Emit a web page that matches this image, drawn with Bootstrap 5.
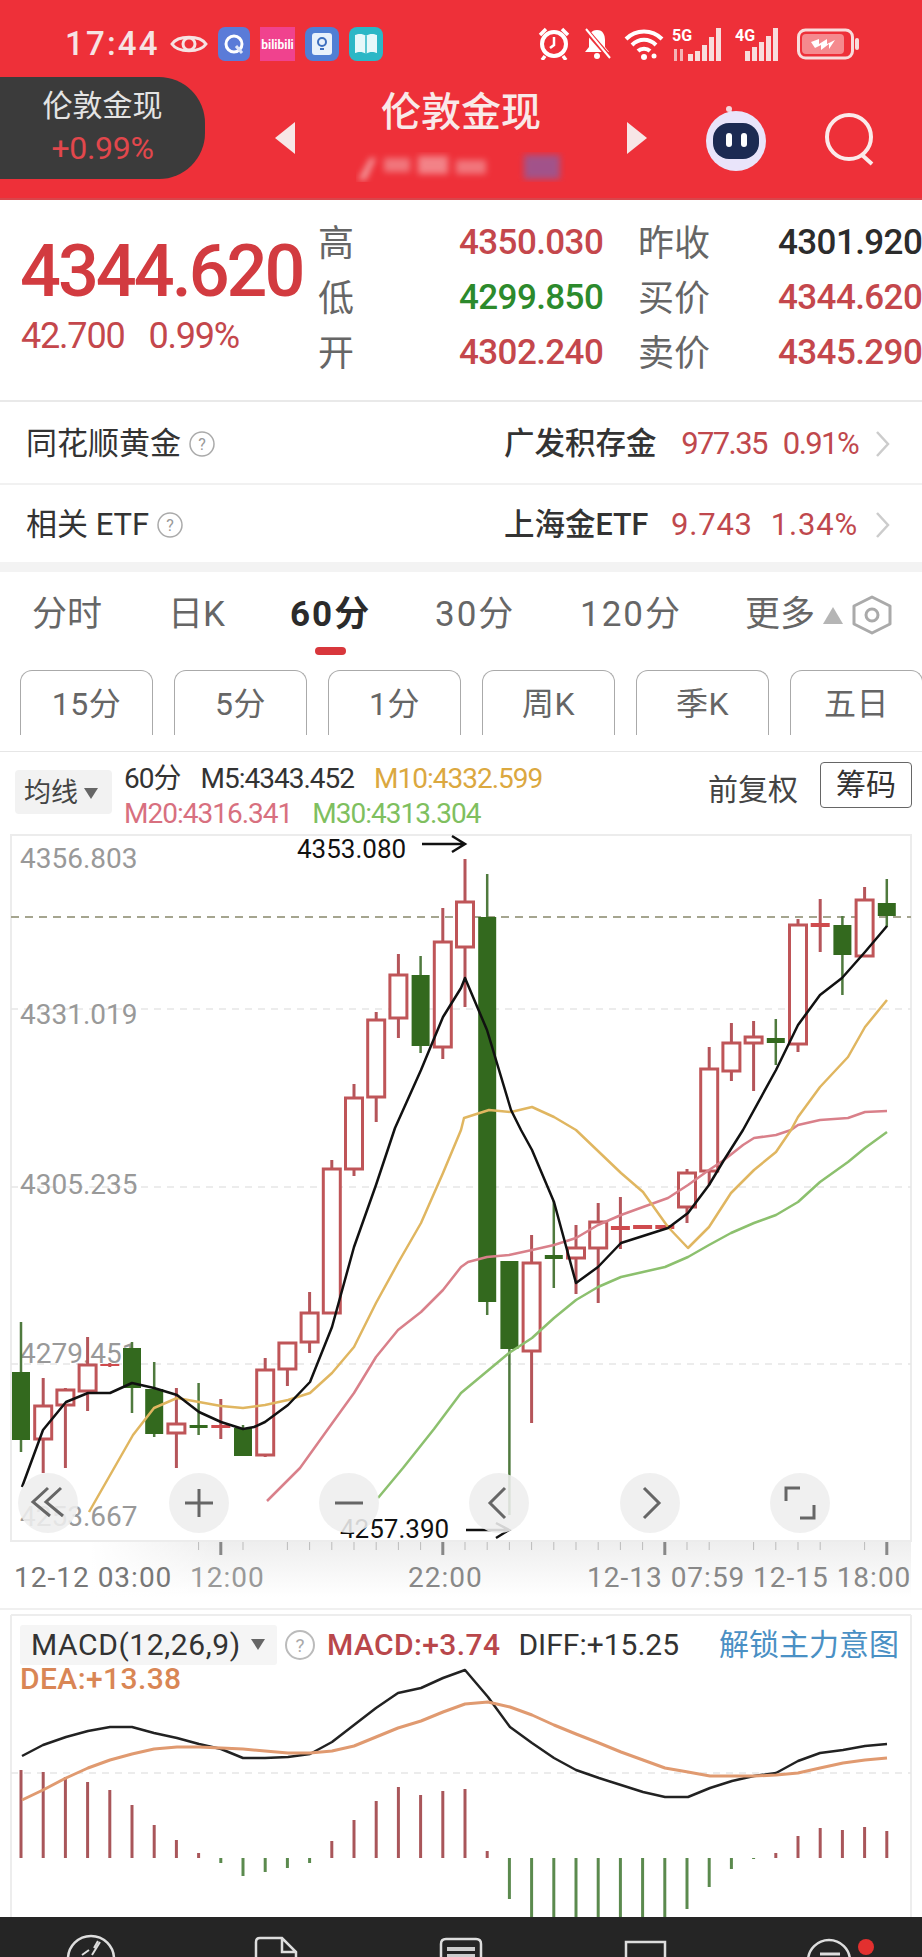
<!DOCTYPE html>
<html lang="zh-CN">
<head>
  <meta charset="UTF-8">
  <meta name="viewport" content="width=device-width, initial-scale=1.0">
  <title>伦敦金现</title>
  <link href="https://cdn.jsdelivr.net/npm/bootstrap@5.3.0/dist/css/bootstrap.min.css" rel="stylesheet">
  <style>
    body { width: 922px; height: 1957px; overflow: hidden; background: #fff; font-family: Roboto, "Noto Sans CJK SC", sans-serif; color: #333; }
    svg { display: block; flex: none; }
    .hq-red { color: #c4474c; }
    .hq-green { color: #2c8a2c; }

    .hq-head { height: 200px; background: #ee3039; border-bottom: 2px solid #d9454b; color: #fff; }
    .hq-status { height: 77px; padding: 10px 62px 0 65px; }
    .hq-time { font-size: 33px; font-weight: 500; letter-spacing: 2.2px; width: 105px; color: #f6e3e3; }
    .hq-app { margin-left: 10px; }
    .hq-pill { width: 205px; height: 102px; background: #3b3b3b; border-radius: 0 46px 46px 0; line-height: 1.36; }
    .hq-pill-name { font-size: 30px; color: #e4e4e4; }
    .hq-pill-pct { font-size: 32px; color: #e2474c; letter-spacing: -.3px; }
    .hq-title { font-size: 40px; line-height: 56px; margin-top: 8px; font-weight: 500; color: #f9e9e9; }
    .hq-titlebox { width: 332px; }
    .hq-smudge { margin-top: 11px; opacity: .6; }

    .hq-quote { height: 202px; border-bottom: 2px solid #e9e9e9; }
    .hq-left { width: 318px; padding: 38px 0 0 20px; }
    .hq-price { font-size: 72px; line-height: 68px; font-weight: 500; letter-spacing: -3px; color: #d23b40; }
    .hq-sub { font-size: 36px; line-height: 44px; letter-spacing: -1.2px; margin-top: 8px; margin-left: 1px; color: #c4474c; }
    .hq-grid { display: grid; grid-template-columns: 141px 179px 140px 144px; grid-auto-rows: 55px; padding-top: 16px; white-space: nowrap; align-items: center; }
    .hq-lab { font-size: 36px; color: #666; }
    .hq-val { font-size: 35px; font-weight: 500; letter-spacing: -.6px; }
    .hq-black { color: #2c2c2c; }

    .hq-row { height: 83px; padding: 3px 32px 0 0; border-bottom: 2px solid #f1f1f1; font-size: 31px; }
    .hq-row-b { height: 77px; border-bottom: 0; }
    .hq-row-left { width: 504px; padding-left: 26px; color: #333; }
    .hq-row-name { color: #333; font-weight: 500; font-size: 30.5px; }
    .hq-num { font-size: 31px; color: #c0484d; letter-spacing: -1.6px; margin-left: 16px; }
    .hq-row-b .hq-num { letter-spacing: .8px; margin-left: 18px; }
    .hq-chev { margin-left: 17px; }
    .hq-band { height: 10px; background: #f3f3f3; }

    .hq-tabs { height: 98px; padding: 16px 0 0 32px; font-size: 35px; color: #666; }
    .hq-tab { position: relative; height: 54px; line-height: 54px; white-space: nowrap; flex: none; }
    .hq-tab:nth-child(1) { width: 136px; }
    .hq-tab:nth-child(2) { width: 122px; }
    .hq-tab:nth-child(3) { width: 145px; letter-spacing: 2px; }
    .hq-tab:nth-child(4) { width: 145px; letter-spacing: 2px; }
    .hq-tab:nth-child(5) { width: 165px; letter-spacing: 2px; }
    .hq-tab-on { font-weight: 700; color: #2b2b2b; }
    .hq-tab-on::after { content: ""; position: absolute; left: 25px; top: 59px; width: 31px; height: 8px; border-radius: 4px; background: #d8373c; }

    .hq-periods { height: 82px; padding-left: 20px; gap: 21px; border-bottom: 1px solid #e6e6e6; }
    .hq-period { width: 133px; height: 65px; border: 1px solid #aaa; border-bottom: 0; border-radius: 12px 12px 0 0; font-size: 32px; letter-spacing: .5px; color: #666; line-height: 66px; text-align: center; flex: none; }

    .hq-legend { height: 82px; position: relative; padding: 0 10px 0 15px; }
    .hq-malabel { width: 97px; height: 44px; margin-top: 18px; background: #f2f2f2; border-radius: 4px; font-size: 27px; padding: 3px 0 0 9px; gap: 6px; color: #444; }
    .hq-tri { width: 0; height: 0; border-left: 7px solid transparent; border-right: 7px solid transparent; border-top: 11px solid #666; }
    .hq-ma { margin-left: 12px; padding-top: 9px; font-size: 28px; line-height: 35px; letter-spacing: -1px; white-space: nowrap; }
    .hq-ma span { margin-right: 20px; }
    .hq-m10 { color: #dba83f; }
    .hq-m20 { color: #d8707f; }
    .hq-m30 { color: #7fbf5f; }
    .hq-fq { font-size: 30px; color: #444; margin-top: 15px; }
    .hq-chips { width: 92px; height: 46px; margin: 10px 0 0 22px; border: 1px solid #666; border-radius: 4px; font-size: 30px; line-height: 43px; text-align: center; color: #333; }

    .hq-chart { position: relative; height: 780px; }
    .hq-ctl { position: absolute; top: 639px; width: 60px; height: 60px; border-radius: 50%; background: rgba(238,238,238,.88); }
    .hq-ctl svg { margin: 10px; }
    .hq-ctl-a { left: 18px; }
    .hq-ctl-b { left: 169px; }
    .hq-ctl-c { left: 319px; }
    .hq-ctl-d { left: 469px; }
    .hq-ctl-e { left: 620px; }
    .hq-ctl-f { left: 770px; }

    .hq-macd { position: relative; height: 303px; overflow: hidden; }
    .hq-macd-head { position: absolute; left: 20px; right: 23px; top: 8px; font-size: 30px; white-space: nowrap; }
    .hq-macd-box { width: 257px; height: 40px; background: #f5f5f5; border-radius: 3px; padding-left: 11px; font-size: 30px; letter-spacing: .6px; color: #333; gap: 10px; }
    .hq-macd-val { font-weight: 500; color: #b9474b; margin-left: 12px; letter-spacing: .4px; }
    .hq-macd-diff { color: #333; margin-left: 18px; }
    .hq-macd-lock { color: #4a90c4; margin-left: auto; }
    .hq-macd-dea { color: #d98655; font-weight: 500; line-height: 30px; margin-top: -3px; letter-spacing: .4px; }

    .hq-foot { height: 40px; background: #252525; overflow: hidden; padding-left: 61px; gap: 125px; }
    .hq-dot { position: absolute; left: 857px; top: 1938px; }
  </style>
</head>
<body>
  <div class="hq-head">
    <div class="hq-status d-flex align-items-center">
      <div class="hq-time">17:44</div>
      <svg width="38" height="24" viewBox="0 0 38 24"><path d="M2 12C8 3 30 3 36 12C30 21 8 21 2 12Z" fill="none" stroke="#f6e3e3" stroke-width="3"/><circle cx="19" cy="12" r="6" fill="none" stroke="#f6e3e3" stroke-width="3"/></svg>
      <svg width="32" height="34" class="hq-app" viewBox="0 0 32 34"><rect width="32" height="34" rx="7" fill="#5a7bd8"/><circle cx="16" cy="17" r="8" fill="none" stroke="#fff" stroke-width="3"/><path d="M18 19l6 7" stroke="#dfe6f8" stroke-width="3"/></svg>
      <svg width="35" height="34" class="hq-app" viewBox="0 0 35 34"><rect width="35" height="34" fill="#f0428e"/><text x="17.5" y="22" text-anchor="middle" font-size="12" font-weight="700" fill="#fff" font-family="Roboto">bilibili</text></svg>
      <svg width="34" height="34" class="hq-app" viewBox="0 0 34 34"><rect width="34" height="34" rx="8" fill="#4f7fd4"/><rect x="7" y="6" width="20" height="22" rx="3" fill="#e8f1fb"/><circle cx="17" cy="15" r="4" fill="none" stroke="#3d6fbf" stroke-width="2"/><path d="M15 22h4" stroke="#3d6fbf" stroke-width="2"/></svg>
      <svg width="34" height="34" class="hq-app" viewBox="0 0 34 34"><rect width="34" height="34" rx="8" fill="#2bb7c6"/><path d="M17 9C13 6 9 7 6 8V26C9 25 13 24 17 27C21 24 25 25 28 26V8C25 7 21 6 17 9Z" fill="#e6f8fa"/><path d="M17 9V27" stroke="#2bb7c6" stroke-width="1.5"/></svg>

      <div class="ms-auto d-flex align-items-center gap-2">
        <svg width="32" height="33" viewBox="0 0 32 33"><circle cx="16" cy="17" r="12" fill="none" stroke="#fff" stroke-width="4"/><path d="M16 10v8l-4 3" stroke="#fff" stroke-width="2.5" fill="none"/><path d="M2 8L8 2M30 8L24 2M7 29l-3 4M25 29l3 4" stroke="#fff" stroke-width="3.5"/></svg>
        <svg width="30" height="33" class="ms-1" viewBox="0 0 30 33"><path d="M15 3C9 3 7 8 7 13V20L3 25H27L23 20V13C23 8 21 3 15 3Z" fill="#fff"/><circle cx="15" cy="29" r="3" fill="#fff"/><path d="M3 2L29 32" stroke="#ee3039" stroke-width="5"/><path d="M4 2L28 31" stroke="#fff" stroke-width="2"/></svg>
        <svg width="40" height="32" class="ms-1" viewBox="0 0 40 32"><path d="M2 11C12 1 28 1 38 11M8 17C15 10 25 10 32 17M14 23C17 20 23 20 26 23" fill="none" stroke="#fff" stroke-width="4"/><circle cx="20" cy="29" r="3" fill="#fff"/><circle cx="30" cy="28" r="2.5" fill="#fff"/></svg>
        <svg width="55" height="34" viewBox="0 0 55 34"><text x="0" y="14" font-size="16" font-weight="700" fill="#fff" font-family="Roboto">5G</text><path d="M16 34V27h5v7zM23 34V24h5v10zM30 34V18h5v16zM37 34V10h5v24zM44 34V1h5v33z" fill="#f8dcdc"/><path d="M2 34V22h3v12zM8 34V22h3v12z" fill="#f4b3b5"/></svg>
        <svg width="50" height="34" viewBox="0 0 50 34"><text x="0" y="14" font-size="16" font-weight="700" fill="#fff" font-family="Roboto">4G</text><path d="M10 34V24h5v10zM17 34V20h5v14zM24 34V15h5v19zM31 34V9h5v25zM38 34V1h5v33z" fill="#f8dcdc"/></svg>
        <svg width="63" height="34" class="ms-1" viewBox="0 0 63 34"><rect x="1.5" y="3" width="54" height="28" rx="7" fill="none" stroke="#f8dcdc" stroke-width="3"/><rect x="5" y="7" width="42" height="20" rx="4" fill="#f58a8e"/><path d="M14 15l8-3v5l8-5v5l8-4-6 9v-5l-8 6v-5l-6 3z" fill="#fff"/><rect x="58" y="11" width="4" height="12" rx="2" fill="#f8dcdc"/></svg>
      </div>
    </div>
    <div class="d-flex">
      <div class="hq-pill d-flex flex-column align-items-center justify-content-center">
        <div class="hq-pill-name">伦敦金现</div>
        <div class="hq-pill-pct">+0.99%</div>
      </div>
      <svg width="20" height="32" style="margin:45px 0 0 70px" viewBox="0 0 20 32"><path d="M20 0V32L0 16Z" fill="#f7e6e6"/></svg>
      <div class="hq-titlebox text-center">
        <div class="hq-title">伦敦金现</div>
        <svg width="210" height="30" class="mx-auto hq-smudge" viewBox="0 0 210 30"><defs><filter id="smudge" x="-10%" y="-40%" width="120%" height="180%"><feGaussianBlur stdDeviation="3"/></filter></defs><g filter="url(#smudge)"><path d="M2 28L14 6H20L10 28Z" fill="#f6dcdc"/><rect x="28" y="6" width="26" height="14" fill="#f3a4a8"/><rect x="62" y="4" width="30" height="18" fill="#f6b9bc"/><rect x="100" y="8" width="30" height="14" fill="#f3a4a8"/><rect x="168" y="3" width="36" height="24" fill="#6f6bc0"/></g></svg>
      </div>
      <svg width="20" height="32" style="margin-top:45px" viewBox="0 0 20 32"><path d="M0 0V32L20 16Z" fill="#f7e6e6"/></svg>
      <svg width="62" height="66" style="margin:28px 0 0 58px" viewBox="0 0 62 66"><circle cx="24" cy="4" r="3" fill="#f3d7dd"/><path d="M25 6L30 12" stroke="#f3d7dd" stroke-width="2"/><circle cx="31" cy="36" r="30" fill="#e9e4fa"/><rect x="8" y="18" width="46" height="36" rx="16" fill="#1c2a52"/><rect x="21" y="28" width="6" height="14" rx="3" fill="#fff"/><rect x="36" y="28" width="6" height="14" rx="3" fill="#fff"/></svg>
      <svg width="52" height="54" style="margin:35px 0 0 57px" viewBox="0 0 52 54"><circle cx="25" cy="25" r="22" fill="none" stroke="#fbeaea" stroke-width="4"/><path d="M38 43L48 52" stroke="#fbeaea" stroke-width="4"/></svg>
    </div>
  </div>

  <div class="hq-quote d-flex">
    <div class="hq-left">
      <div class="hq-price">4344.620</div>
      <div class="hq-sub d-flex gap-4"><span>42.700</span><span>0.99%</span></div>
    </div>
    <div class="hq-grid flex-grow-1">
      <div class="hq-lab">高</div><div class="hq-val hq-red">4350.030</div><div class="hq-lab">昨收</div><div class="hq-val hq-black">4301.920</div>
      <div class="hq-lab">低</div><div class="hq-val hq-green">4299.850</div><div class="hq-lab">买价</div><div class="hq-val hq-red">4344.620</div>
      <div class="hq-lab">开</div><div class="hq-val hq-red">4302.240</div><div class="hq-lab">卖价</div><div class="hq-val hq-red">4345.290</div>
    </div>
  </div>

  <div class="hq-row d-flex align-items-center">
    <div class="hq-row-left d-flex align-items-center gap-2">同花顺黄金<svg width="26" height="26" viewBox="0 0 26 26"><circle cx="13" cy="13" r="12" fill="none" stroke="#aaa" stroke-width="1.5"/><text x="13" y="19" text-anchor="middle" font-size="16" fill="#999">?</text></svg></div>
    <div class="hq-row-name">广发积存金</div>
    <div class="hq-num ms-auto">977.35</div>
    <div class="hq-num">0.91%</div>
    <svg width="15" height="28" class="hq-chev" viewBox="0 0 15 28"><path d="M2 2L13 14L2 26" fill="none" stroke="#ccc" stroke-width="2.5"/></svg>
  </div>
  <div class="hq-row hq-row-b d-flex align-items-center">
    <div class="hq-row-left d-flex align-items-center gap-2">相关 ETF<svg width="26" height="26" viewBox="0 0 26 26"><circle cx="13" cy="13" r="12" fill="none" stroke="#aaa" stroke-width="1.5"/><text x="13" y="19" text-anchor="middle" font-size="16" fill="#999">?</text></svg></div>
    <div class="hq-row-name">上海金ETF</div>
    <div class="hq-num ms-auto">9.743</div>
    <div class="hq-num">1.34%</div>
    <svg width="15" height="28" class="hq-chev" viewBox="0 0 15 28"><path d="M2 2L13 14L2 26" fill="none" stroke="#ccc" stroke-width="2.5"/></svg>
  </div>
  <div class="hq-band"></div>

  <div class="hq-tabs d-flex">
    <div class="hq-tab">分时</div>
    <div class="hq-tab">日K</div>
    <div class="hq-tab hq-tab-on">60分</div>
    <div class="hq-tab">30分</div>
    <div class="hq-tab">120分</div>
    <div class="hq-tab d-flex align-items-center gap-2">更多
      <svg width="20" height="17" viewBox="0 0 20 17"><path d="M10 0L20 17H0Z" fill="#b5b5b5"/></svg>
      <svg width="42" height="40" viewBox="0 0 42 40"><path d="M21 2L39 11V29L21 38L3 29V11Z" fill="none" stroke="#aaa" stroke-width="3" stroke-linejoin="round"/><circle cx="21" cy="20" r="6" fill="none" stroke="#aaa" stroke-width="3"/></svg>
    </div>
  </div>
  <div class="hq-periods d-flex">
    <div class="hq-period">15分</div>
    <div class="hq-period">5分</div>
    <div class="hq-period">1分</div>
    <div class="hq-period">周K</div>
    <div class="hq-period">季K</div>
    <div class="hq-period">五日</div>
  </div>

  <div class="hq-legend d-flex align-items-start">
    <div class="hq-malabel d-flex align-items-center">均线<span class="hq-tri"></span></div>
    <div class="hq-ma">
      <div><span>60分</span><span>M5:4343.452</span><span class="hq-m10">M10:4332.599</span></div>
      <div><span class="hq-m20">M20:4316.341</span><span class="hq-m30">M30:4313.304</span></div>
    </div>
    <div class="hq-fq ms-auto">前复权</div>
    <div class="hq-chips">筹码</div>
  </div>

  <div class="hq-chart">
    <svg id="klineChart" width="922" height="780" viewBox="0 834 922 780" font-family="Roboto, sans-serif"></svg>
    <div class="hq-ctl hq-ctl-a"><svg width="40" height="40" viewBox="0 0 40 40"><path d="M20 5L5 19L22 33M33 5L18 19L35 33" fill="none" stroke="#666" stroke-width="3"/></svg></div>
    <div class="hq-ctl hq-ctl-b"><svg width="40" height="40" viewBox="0 0 40 40"><path d="M20 6V34M6 20H34" stroke="#666" stroke-width="3"/></svg></div>
    <div class="hq-ctl hq-ctl-c"><svg width="40" height="40" viewBox="0 0 40 40"><path d="M6 20H34" stroke="#666" stroke-width="3"/></svg></div>
    <div class="hq-ctl hq-ctl-d"><svg width="40" height="40" viewBox="0 0 40 40"><path d="M26 5L11 20L26 35" fill="none" stroke="#666" stroke-width="3"/></svg></div>
    <div class="hq-ctl hq-ctl-e"><svg width="40" height="40" viewBox="0 0 40 40"><path d="M14 5L29 20L14 35" fill="none" stroke="#666" stroke-width="3"/></svg></div>
    <div class="hq-ctl hq-ctl-f"><svg width="40" height="40" viewBox="0 0 40 40"><path d="M6 18V5H20M34 22V35H20" fill="none" stroke="#666" stroke-width="3"/></svg></div>
  </div>

  <div class="hq-macd">
    <svg id="macdChart" width="922" height="303" viewBox="0 1614 922 303"></svg>
    <div class="hq-macd-head">
      <div class="d-flex align-items-center">
        <div class="hq-macd-box d-flex align-items-center">MACD(12,26,9)<span class="hq-tri"></span></div>
        <svg width="30" height="30" class="ms-2" viewBox="0 0 30 30"><circle cx="15" cy="15" r="14" fill="none" stroke="#bbb" stroke-width="2"/><text x="15" y="22" text-anchor="middle" font-size="19" fill="#aaa">?</text></svg>
        <span class="hq-macd-val">MACD:+3.74</span>
        <span class="hq-macd-diff">DIFF:+15.25</span>
        <span class="hq-macd-lock">解锁主力意图</span>
      </div>
      <div class="hq-macd-dea">DEA:+13.38</div>
    </div>
  </div>

  <div class="hq-foot d-flex">
    <svg width="60" height="40" viewBox="0 0 60 40"><circle cx="30" cy="42" r="23" fill="none" stroke="#ddd" stroke-width="2.5"/><path d="M21 38l7-5M33 31l4-7M39 25l-8 13" fill="none" stroke="#ddd" stroke-width="2"/></svg>
    <svg width="60" height="40" viewBox="0 0 60 40"><path d="M10 40V25Q10 21 14 21H36L50 35V40M36 21V35H50" fill="none" stroke="#ddd" stroke-width="2.5"/></svg>
    <svg width="60" height="40" viewBox="0 0 60 40"><path d="M10 40V27Q10 22 15 22H45Q50 22 50 27V40" fill="none" stroke="#ddd" stroke-width="2.5"/><path d="M16 30H44V34H16ZM16 37H44V40H16Z" fill="#ccc"/></svg>
    <svg width="60" height="40" viewBox="0 0 60 40"><path d="M10 40V25H49V40" fill="none" stroke="#ddd" stroke-width="2.5"/></svg>
    <svg width="60" height="40" viewBox="0 0 60 40"><circle cx="28" cy="44" r="21" fill="none" stroke="#ddd" stroke-width="2.5"/><path d="M19 37H39" stroke="#ddd" stroke-width="3"/></svg>
  </div>
  <svg width="18" height="18" class="hq-dot" viewBox="0 0 18 18"><circle cx="9" cy="9" r="8" fill="#e3302f"/></svg>

  <script src="https://cdn.jsdelivr.net/npm/bootstrap@5.3.0/dist/js/bootstrap.bundle.min.js"></script>
  <script>
    const barX = i => 21 + 22.2 * i;

    // hi, lo, top, bottom, r/g
    const velas = [
      [1322,1452,1372,1440,'g'],[1378,1473,1406,1439,'r'],[1388,1468,1390,1405,'r'],[1337,1411,1365,1391,'r'],
      [1363,1367,1364,1366,'r'],[1342,1413,1348,1388,'g'],[1362,1437,1389,1434,'g'],[1388,1468,1424,1433,'r'],
      [1383,1435,1425,1428,'g'],[1399,1439,1425,1428,'r'],[1425,1456,1428,1456,'g'],[1358,1457,1370,1455,'r'],
      [1342,1386,1343,1369,'r'],[1292,1353,1313,1342,'r'],[1160,1313,1169,1313,'r'],[1084,1176,1098,1169,'r'],
      [1012,1122,1020,1097,'r'],[954,1038,975,1018,'r'],[956,1053,975,1046,'g'],[908,1059,942,1047,'r'],
      [859,1007,902,947,'r'],[874,1315,917,1302,'g'],[1261,1515,1261,1349,'g'],[1235,1423,1263,1351,'r'],
      [1201,1288,1255,1259,'g'],[1225,1294,1248,1258,'r'],[1203,1303,1222,1248,'r'],[1197,1249,1226,1230,'r'],
      [1225,1229,1225,1229,'r'],[1225,1229,1225,1229,'r'],[1169,1223,1173,1207,'r'],[1047,1185,1069,1171,'r'],
      [1023,1081,1043,1071,'r'],[1021,1091,1037,1043,'r'],[1019,1065,1038,1043,'g'],[919,1052,925,1044,'r'],
      [899,952,923,927,'r'],[916,995,925,955,'g'],[887,956,900,956,'r'],[879,927,903,916,'g']
    ];

    const ma5 = "22,1487 43,1430 66,1402 88,1393 110,1393 132,1383 154,1388 177,1395 199,1412 221,1422 243,1429 254,1427 265,1422 288,1405 310,1382 332,1327 354,1247 376,1185 395,1128 421,1070 443,1017 461,988 465,978 487,1030 511,1110 521,1130 532,1150 554,1202 576,1283 598,1267 621,1243 643,1236 668,1228 688,1213 709,1185 724,1160 743,1130 776,1070 798,1025 820,995 842,978 865,952 887,926";
    const ma10 = "89,1512 133,1435 154,1408 177,1398 199,1402 221,1406 243,1408 265,1405 288,1400 310,1393 332,1373 354,1347 376,1303 398,1263 421,1223 443,1173 461,1130 464,1118 489,1110 511,1112 532,1107 554,1117 576,1130 621,1173 643,1192 668,1227 688,1248 709,1227 731,1193 754,1170 776,1152 791,1130 798,1117 820,1087 848,1057 865,1027 887,1000";
    const ma20 = "267,1501 300,1468 328,1429 354,1393 376,1357 398,1330 421,1312 443,1290 461,1267 468,1262 487,1257 509,1255 532,1250 554,1245 576,1238 598,1225 621,1215 643,1207 668,1198 688,1185 709,1170 724,1160 743,1145 754,1138 776,1135 791,1130 798,1125 820,1120 848,1118 865,1112 887,1111";
    const ma30 = "378,1498 403,1468 434,1429 461,1393 509,1353 532,1338 554,1318 576,1300 598,1287 621,1277 643,1272 665,1267 688,1257 709,1245 731,1233 754,1223 776,1215 798,1202 820,1182 848,1162 865,1148 887,1132";

    let k = `<defs><linearGradient id="axisFade" x1="0" y1="0" x2="0" y2="1"><stop offset="0" stop-color="#eee"/><stop offset="1" stop-color="#fff"/></linearGradient>
      <linearGradient id="axisSide" x1="0" y1="0" x2="1" y2="0"><stop offset="0" stop-color="#fff"/><stop offset="1" stop-color="#fff" stop-opacity="0"/></linearGradient></defs>`;
    k += `<rect x="90" y="1542" width="821" height="55" fill="url(#axisFade)"/><rect x="90" y="1542" width="130" height="55" fill="url(#axisSide)"/>`;
    k += `<rect x="11" y="835" width="900" height="706" fill="#fff" stroke="#ececec" stroke-width="2"/>`;
    [1009, 1187, 1364].forEach(y => { k += `<path d="M11 ${y}H911" stroke="#e6e6e6" stroke-width="1.5" stroke-dasharray="7 6"/>`; });
    k += `<path d="M11 917H911" stroke="#a5a58f" stroke-width="2" stroke-dasharray="8 6"/>`;

    [[858,'4356.803'],[1014,'4331.019'],[1184,'4305.235'],[1353,'4279.451'],[1516,'4253.667']].forEach(e => {
      k += `<text x="20" y="${e[0] + 10}" font-size="28" fill="#999">${e[1]}</text>`;
    });

    velas.forEach((v, i) => {
      const x = barX(i), col = v[4] === 'r' ? '#bf5558' : '#33691e', wick = v[4] === 'r' ? '#b5555a' : '#4f7a3e';
      const ww = v[4] === 'r' ? 3 : 2.5;
      k += `<path d="M${x} ${v[0]}V${v[2]}M${x} ${v[3]}V${v[1]}" stroke="${wick}" stroke-width="${ww}"/>`;
      if (v[4] === 'g') k += `<rect x="${x - 9}" y="${v[2]}" width="18" height="${v[3] - v[2]}" fill="${col}"/>`;
      else if (v[3] - v[2] < 6) k += `<rect x="${x - 9.5}" y="${v[2]}" width="19" height="${v[3] - v[2]}" fill="#cf4b4e"/>`;
      else k += `<rect x="${x - 8.5}" y="${v[2]}" width="17" height="${v[3] - v[2]}" fill="#fff" stroke="${col}" stroke-width="3"/>`;
    });

    const linea = (pts, c, w) => `<polyline points="${pts}" fill="none" stroke="${c}" stroke-width="${w}" stroke-linejoin="round"/>`;
    k += linea(ma30, '#8cc06e', 2.5) + linea(ma20, '#d9808a', 2.5) + linea(ma10, '#e0b660', 2.5) + linea(ma5, '#111', 2.5);

    k += `<text x="297" y="858" font-size="26" fill="#111">4353.080</text><path d="M422 844H464M452 836L465 844L452 852" fill="none" stroke="#111" stroke-width="2.5"/>`;
    k += `<text x="340" y="1538" font-size="26" fill="#111">4257.390</text><path d="M466 1530H508M496 1523L509 1530L496 1538" fill="none" stroke="#111" stroke-width="2.5"/>`;

    // marcas del eje x: gruesas cada 10 velas, faltan 11, 32 y 37
    for (let i = 8; i < 40; i++) {
      const x = barX(i);
      if ((i - 9) % 10 === 0) k += `<path d="M${x} 1542V1555" stroke="#888" stroke-width="3"/>`;
      else if (![11, 32, 37].includes(i)) k += `<path d="M${x} 1542V1550" stroke="#bbb" stroke-width="1"/>`;
    }

    k += `<text x="14" y="1587" font-size="28" letter-spacing="1" fill="#777">12-12 03:00</text>`;
    k += `<text x="190" y="1587" font-size="28" letter-spacing="1" fill="#999">12:00</text>`;
    k += `<text x="408" y="1587" font-size="28" letter-spacing="1" fill="#888">22:00</text>`;
    k += `<text x="587" y="1587" font-size="28" letter-spacing="1" fill="#888">12-13 07:59</text>`;
    k += `<text x="753" y="1587" font-size="28" letter-spacing="1" fill="#888">12-15 18:00</text>`;
    k += `<path d="M0 1609H922" stroke="#f0f0f0" stroke-width="2"/>`;
    document.getElementById('klineChart').innerHTML = k;

    // macd: tope de cada barra, base en 1858
    const barras = [1770,1772,1777,1782,1790,1805,1825,1840,1853,1863,1876,1872,1868,1863,1841,1820,1801,1787,1795,1791,1789,1851,1899,1920,1920,1920,1920,1920,1920,1920,1909,1887,1869,1859,1853,1836,1828,1830,1827,1831];
    const diff = "22,1756 43,1745 66,1737 88,1731 110,1727 132,1727 154,1733 177,1738 199,1744 221,1749 243,1758 265,1758 288,1757 310,1754 332,1742 354,1725 376,1708 398,1693 421,1688 443,1678 465,1670 488,1697 510,1727 532,1743 554,1758 576,1770 599,1778 621,1785 643,1792 665,1797 688,1797 710,1788 732,1781 754,1776 776,1773 798,1761 820,1753 843,1750 865,1746 887,1744";
    const dea = "22,1800 43,1790 66,1778 88,1768 110,1760 132,1754 154,1749 177,1747 199,1747 221,1748 243,1749 265,1751 288,1753 310,1753 332,1751 354,1746 376,1737 398,1728 421,1721 443,1712 465,1704 488,1702 510,1707 532,1715 554,1725 576,1734 599,1743 621,1752 643,1760 665,1768 688,1772 710,1776 732,1776 754,1776 776,1775 798,1773 820,1768 843,1763 865,1760 887,1758";

    let m = `<path d="M11 1615H911M11 1615V1917M911 1615V1917" fill="none" stroke="#ededed" stroke-width="2"/>`;
    m += `<path d="M11 1773H911" stroke="#e6e6e6" stroke-width="1.5" stroke-dasharray="7 6"/>`;
    barras.forEach((t, i) => {
      const x = barX(i);
      m += `<path d="M${x} 1858V${t}" stroke="${t < 1858 ? '#a9565a' : '#5b8a4e'}" stroke-width="3"/>`;
    });
    m += linea(diff, '#222', 2.5) + linea(dea, '#e09a70', 3);
    document.getElementById('macdChart').innerHTML = m;
  </script>
</body>
</html>
